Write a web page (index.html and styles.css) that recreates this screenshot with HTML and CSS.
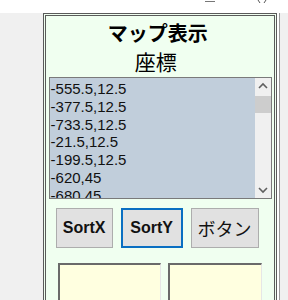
FILE: index.html
```html
<!DOCTYPE html>
<html lang="ja">
<head>
<meta charset="UTF-8" />
<meta name="viewport" content="width=device-width, initial-scale=1" />
<title>マップ表示</title>
<link rel="stylesheet" href="styles.css">
</head>
<body>

<div class="titlebar">
  <span class="min-btn"></span>
  <svg class="close-btn" width="10" height="4" viewBox="0 0 10 4"><path d="M1 0 L3 3 M9 0 L7 3" stroke="#555" stroke-width="1" fill="none"/></svg>
</div>

<div class="main">
  <div class="side"></div>

  <div class="panel">
    <h1 class="title">マップ表示</h1>
    <h2 class="subtitle">座標</h2>

    <div class="listbox">
      <ul class="items">
        <li>-555.5,12.5</li>
        <li>-377.5,12.5</li>
        <li>-733.5,12.5</li>
        <li>-21.5,12.5</li>
        <li>-199.5,12.5</li>
        <li>-620,45</li>
        <li>-680,45</li>
      </ul>
      <div class="scrollbar">
        <svg class="arrow" width="16" height="16" viewBox="0 0 16 16"><path d="M4 10 L8 6 L12 10" stroke="#606060" stroke-width="1.6" fill="none"/></svg>
        <div class="thumb"></div>
        <div class="track"></div>
        <svg class="arrow" width="16" height="16" viewBox="0 0 16 16"><path d="M4 6 L8 10 L12 6" stroke="#606060" stroke-width="1.6" fill="none"/></svg>
      </div>
    </div>

    <div class="buttons">
      <button class="btn btn-x">SortX</button>
      <button class="btn btn-y focused">SortY</button>
      <button class="btn btn-jp">ボタン</button>
    </div>

    <div class="boxes">
      <div class="box box-left"></div>
      <div class="box box-right"></div>
    </div>
  </div>

  <div class="edge"></div>
</div>

</body>
</html>
```

FILE: styles.css
```css
body { margin: 0; background: #fff; font-family: "Liberation Sans", Arial, sans-serif; overflow: hidden; }
.titlebar { height: 13px; display: flex; position: relative; }
.min-btn { position: absolute; left: 205px; top: 1px; width: 10px; height: 1px; background: #777; }
.close-btn { position: absolute; left: 257px; top: 0; }

.main { display: flex; height: 287px; }
.side { width: 43px; background: #f0f0f0; }
.edge { width: 8px; background: #f0f0f0; border-left: 1px solid #9a9a9a; margin-left: 2px; }

.panel {
  width: 231px; border: 3px double #5a5a5a; border-bottom: none;
  background: #f0fff0; padding: 4px 0 0 0;
}
.title {
  margin: 0; font-size: 20px; line-height: 26px; text-align: center; font-weight: bold;
  font-family: "Noto Sans CJK JP", sans-serif; padding-right: 4px;
}
.subtitle {
  margin: 2px 0 0; font-size: 21px; line-height: 26px; text-align: center; font-weight: normal;
  font-family: "Noto Sans CJK JP", sans-serif; padding-right: 8px;
}

.listbox {
  margin: 3px 0 0 3px; width: 221px; height: 120px; display: flex;
  border: 1px solid #7a7a7a; background: #c1cedb; overflow: hidden;
}
.items { list-style: none; margin: 0; padding: 2px 0 0 1px; flex: 1; font-size: 15px; line-height: 17.8px; color: #111; }
.scrollbar { width: 16px; background: #f0f0f0; display: flex; flex-direction: column; }
.arrow { display: block; }
.thumb { height: 17px; background: #cdcdcd; margin: 2px 0 0; }
.track { flex: 1; }

.buttons { display: flex; gap: 8px; margin: 9px 0 0 10px; }
.btn {
  height: 40px; background: #e1e1e1; border: 1px solid #adadad; padding: 0;
  font-family: "Liberation Sans", Arial, sans-serif; font-size: 16px; font-weight: bold; color: #111;
}
.btn-x { width: 57px; }
.btn-y { width: 62px; }
.btn-jp { width: 68px; font-family: "Noto Sans CJK JP", sans-serif; font-weight: normal; font-size: 18px; }
.focused { border: 2px solid #0a6fc2; }

.boxes { display: flex; gap: 7px; margin: 15px 0 0 12px; }
.box {
  height: 40px; background: #ffffe0;
  border-top: 2px solid #6a6a6a; border-left: 2px solid #6a6a6a;
  border-right: 1px solid #e6e6e6;
}
.box-left { width: 100px; }
.box-right { width: 91px; }
```
